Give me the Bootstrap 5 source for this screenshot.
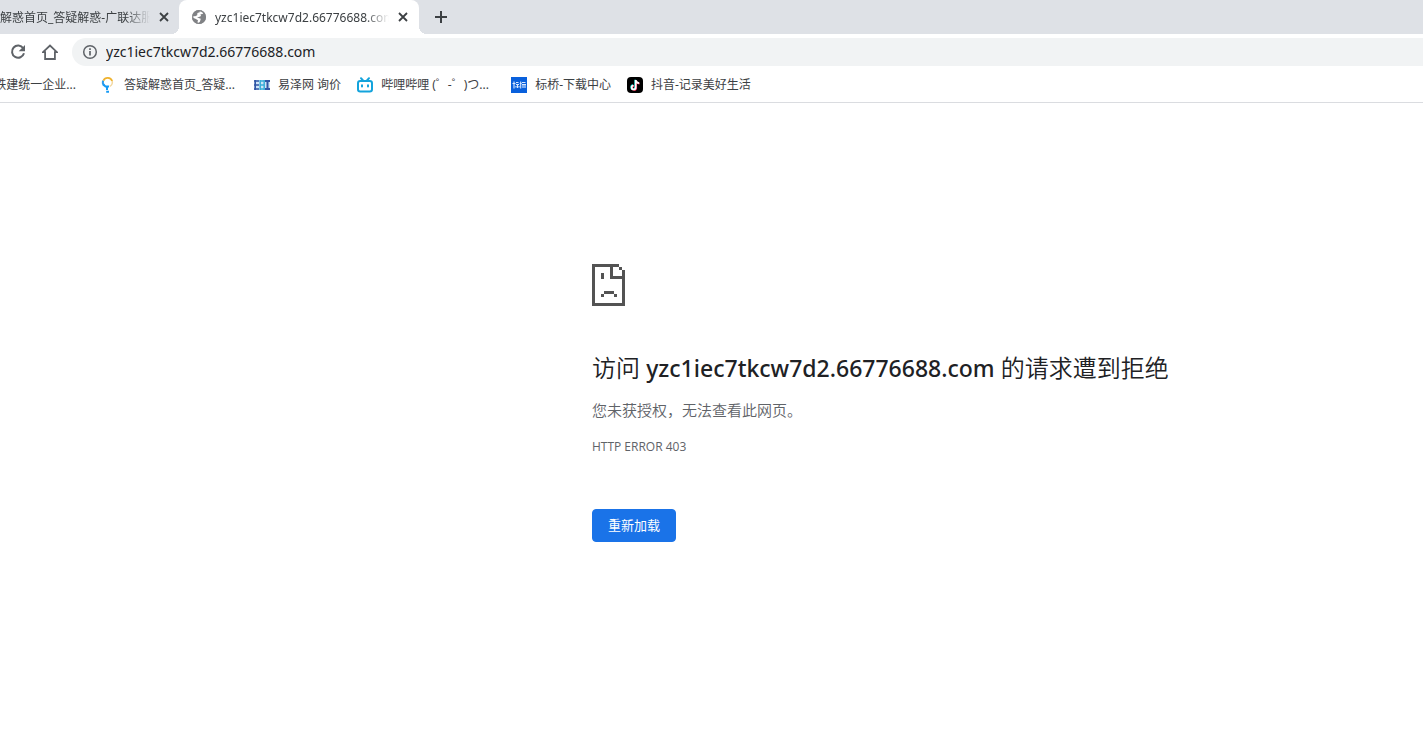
<!DOCTYPE html>
<html lang="zh-CN">
<head>
<meta charset="utf-8">
<meta name="viewport" content="width=device-width, initial-scale=1">
<title>yzc1iec7tkcw7d2.66776688.com</title>
<link href="https://cdn.jsdelivr.net/npm/bootstrap@5.3.0/dist/css/bootstrap.min.css" rel="stylesheet">
<style>
  body { font-family: "Noto Sans", "Noto Sans CJK SC", sans-serif; font-size: 12px; line-height: 16px; color: #3c4043; background: #fff; }
  svg { display: block; flex: none; }
  button.plain { border: 0; background: none; padding: 0; color: inherit; }
  .tabstrip { height: 34px; background: #dee1e6; }
  .tab { height: 34px; }
  .tab-old { width: 179px; padding-right: 9px; }
  .tab-now { width: 240px; padding: 0 10px 0 12px; background: #fff; border-radius: 8px 8px 0 0; position: relative; }
  .tab-now::before, .tab-now::after { content: ""; position: absolute; bottom: 0; width: 8px; height: 8px; }
  .tab-now::before { right: 100%; background: radial-gradient(circle at 0 0, #dee1e6 8px, #fff 8px); }
  .tab-now::after { left: 100%; background: radial-gradient(circle at 100% 0, #dee1e6 8px, #fff 8px); }
  .tab-title { min-width: 0; line-height: 18px; padding-top: 2px; white-space: nowrap; overflow: hidden; -webkit-mask-image: linear-gradient(to left, transparent, #000 24px); mask-image: linear-gradient(to left, transparent, #000 24px); }
  .toolbar { height: 32px; padding: 4px 0 0 10px; color: #5f6368; }
  .omnibox { height: 28px; background: #f1f3f4; border-radius: 14px 0 0 14px; padding-left: 10px; margin-left: 14px; }
  .omnibox input { border: 0; outline: 0; background: none; padding: 0; font-size: 14px; line-height: 20px; color: #202124; }
  .bookmarks { height: 37px; border-bottom: 1px solid #dadce0; overflow: hidden; }
  .bookmarks a { color: #3c4043; text-decoration: none; white-space: nowrap; flex: none; padding-top: 1px; }
  .bookmarks span { padding-top: 1px; }
  .bookmarks .first { width: 84px; padding-right: 8px; overflow: hidden; }
  .long { width: 114px; }
  .error-box { margin-left: 41.6%; max-width: 600px; padding-top: 161px; color: #5f6368; }
  .error-box h1 { font-size: 24px; line-height: 30px; font-weight: 350; color: #202124; margin: 47px 0 15px; white-space: nowrap; }
  .error-box h1 strong { font-size: 23px; font-weight: 500; }
  .error-box .summary { font-size: 15px; line-height: 24px; font-weight: 350; margin-bottom: 17px; }
  .error-box .code { font-family: "Open Sans", sans-serif; font-size: 12px; line-height: 16px; margin-bottom: 54px; }
  .reload { --bs-btn-bg: #1a73e8; --bs-btn-border-color: #1a73e8; --bs-btn-font-size: 13px; --bs-btn-padding-x: 15px; --bs-btn-padding-y: 6px; --bs-btn-border-radius: 4px; line-height: 19px; }
</style>
</head>
<body>
<header>
  <div class="tabstrip d-flex">
    <div class="tab tab-old d-flex align-items-center">
      <div class="tab-title flex-grow-1 me-2">解惑首页_答疑解惑-广联达服务</div>
      <button class="plain" aria-label="关闭标签页"><svg width="12" height="12" viewBox="0 0 12 12"><path d="M2 2l8 8M10 2l-8 8" stroke="#3c4043" stroke-width="1.8"/></svg></button>
    </div>
    <div class="tab tab-now d-flex align-items-center">
      <svg class="me-2" width="16" height="16" viewBox="0 0 16 16"><circle cx="8" cy="8" r="7" fill="#808285"/><path d="M8.5 1.3 13 3.2 11.5 5 9.5 5.2 10 7 8 8 6 8.5 9.8 9.8 9 12.5 7.3 14.7 6.3 13.8 7 11.2 4.4 9.8 1.1 8.5 1.2 7 4.2 7.3 6.2 6.2 6.4 4.1 8.8 3.3Z" fill="#fff"/><circle cx="8" cy="8" r="6.3" fill="none" stroke="#808285" stroke-width="1.3"/></svg>
      <div class="tab-title flex-grow-1 me-2">yzc1iec7tkcw7d2.66776688.com</div>
      <button class="plain" aria-label="关闭标签页"><svg width="12" height="12" viewBox="0 0 12 12"><path d="M2 2l8 8M10 2l-8 8" stroke="#3c4043" stroke-width="1.8"/></svg></button>
    </div>
    <button class="plain ms-3" aria-label="新标签页"><svg width="12" height="12" viewBox="0 0 12 12"><path d="M6 0v12M0 6h12" stroke="#3c4043" stroke-width="2"/></svg></button>
  </div>

  <div class="toolbar d-flex align-items-center">
    <button class="plain me-3" aria-label="重新加载此页"><svg width="16" height="16" viewBox="0 0 16 16"><path d="M13.2 4.2A6.1 6.1 0 1 0 14 9.3" fill="none" stroke="#5f6368" stroke-width="2"/><path d="M15 1v6.3H8.7Z" fill="#5f6368"/></svg></button>
    <button class="plain" aria-label="主页"><svg width="16" height="16" viewBox="0 0 16 16"><path d="M1 8.2 8 1.5l7 6.7H12.9V15H3.1V8.2Z" fill="none" stroke="#5f6368" stroke-width="1.8"/></svg></button>
    <div class="omnibox flex-grow-1 d-flex align-items-center">
      <svg class="me-2" width="16" height="16" viewBox="0 0 16 16"><circle cx="8" cy="8" r="6.3" fill="none" stroke="#5f6368" stroke-width="1.5"/><path d="M8 7v4.5M8 4.2v1.7" stroke="#5f6368" stroke-width="1.7"/></svg>
      <input class="flex-grow-1" type="text" aria-label="地址" value="yzc1iec7tkcw7d2.66776688.com">
    </div>
  </div>

  <nav class="bookmarks d-flex align-items-center">
    <a href="#" class="first d-flex justify-content-end me-3"><span>铁建统一企业...</span></a>
    <a href="#" class="d-flex align-items-center gap-2 me-3">
      <svg width="16" height="16" viewBox="0 0 16 16"><path d="M4 8.5A5 5 0 0 1 3.2 3.5" fill="none" stroke="#2f9bea" stroke-width="2"/><path d="M3.4 3.6A4.8 4.8 0 0 1 12.2 4" fill="none" stroke="#efb22e" stroke-width="1.8"/><path d="M12.2 4Q13 7.5 9.8 9.4" fill="none" stroke="#f3d9a2" stroke-width="1.5"/><path d="M3.3 7.6 5.5 9.6H9M7 9.5V13M6.2 14.8H9" fill="none" stroke="#159af5" stroke-width="2"/></svg>
      <span class="long">答疑解惑首页_答疑...</span></a>
    <a href="#" class="d-flex align-items-center gap-2 me-3">
      <svg width="16" height="16" viewBox="0 0 16 16"><path d="M0 3h16v10H0z" fill="#cfe4f5"/><path d="M0 4h5M0 8h5M0 12h5M1.2 3v10" stroke="#3156a5" stroke-width="1.6"/><path d="M6.2 3v10M10.2 3v10M6 4h4M6 8h4M6 12h4" stroke="#38add8" stroke-width="1.5"/><path d="M11 4h5M13.5 4v8M11 12h5" stroke="#3156a5" stroke-width="2"/></svg>
      <span>易泽网 询价</span></a>
    <a href="#" class="d-flex align-items-center gap-2 me-3">
      <svg width="16" height="16" viewBox="0 0 16 16" fill="none" stroke="#13a3dc" stroke-width="2" stroke-linecap="round"><rect x="1" y="4" width="14" height="10.5" rx="2.2"/><path d="M4 1.2 6 3.5M12 1.2 10 3.5M5 8.2v1.2M11 8.2v1.2"/></svg>
      <span class="long">哔哩哔哩 (゜-゜)つ...</span></a>
    <a href="#" class="d-flex align-items-center gap-2 me-3">
      <svg width="16" height="16" viewBox="0 0 16 16"><path d="M0 0h16v16H0z" fill="#0960dc"/><g stroke="#d8e8ff" fill="none" stroke-width="1.1"><path d="M1.5 6.5h3M3 4.5v7M5 5.5h2.5M5 7.5h3M6.5 7.5V11M5 9v1.5M8 9v1.5M8.7 6.5h2M9.7 4.5v7M11 5.5h3.5M11 7.5h4M12 8v3M14 8v3"/></g></svg>
      <span>标桥-下载中心</span></a>
    <a href="#" class="d-flex align-items-center gap-2">
      <svg width="16" height="16" viewBox="0 0 16 16"><rect width="16" height="16" rx="4" fill="#000"/><g fill="none" stroke-width="1.7"><path d="M8.2 2.7v7.5a2 2 0 1 1-2.2-2M8.2 3Q9 5.8 11.8 5.9" stroke="#25f4ee"/><path d="M9.2 3.4v7.5a2 2 0 1 1-2.2-2M9.2 3.7Q10 6.5 12.6 6.6" stroke="#fe2c55"/><path d="M8.7 3v7.5a2 2 0 1 1-2.2-2M8.7 3.3Q9.5 6.1 12.2 6.2" stroke="#fff"/></g></svg>
      <span>抖音-记录美好生活</span></a>
  </nav>
</header>

<main class="error-box">
  <svg width="33" height="42" viewBox="0 0 33 42" shape-rendering="crispEdges"><path fill="#535353" d="M0 0h27v3h-6v9h9V6h3v36H0ZM3 3v36h27V15H18V3ZM27 3h3v3h-3ZM9 9h3v6H9ZM12 27h10v3H12ZM9 30h3v3H9ZM22 30h3v3h-3Z" fill-rule="evenodd"/></svg>
  <h1>访问 <strong>yzc1iec7tkcw7d2.66776688.com</strong> 的请求遭到拒绝</h1>
  <p class="summary">您未获授权，无法查看此网页。</p>
  <p class="code">HTTP ERROR 403</p>
  <button class="btn btn-primary reload" type="button">重新加载</button>
</main>
<script src="https://cdn.jsdelivr.net/npm/bootstrap@5.3.0/dist/js/bootstrap.bundle.min.js"></script>
</body>
</html>
